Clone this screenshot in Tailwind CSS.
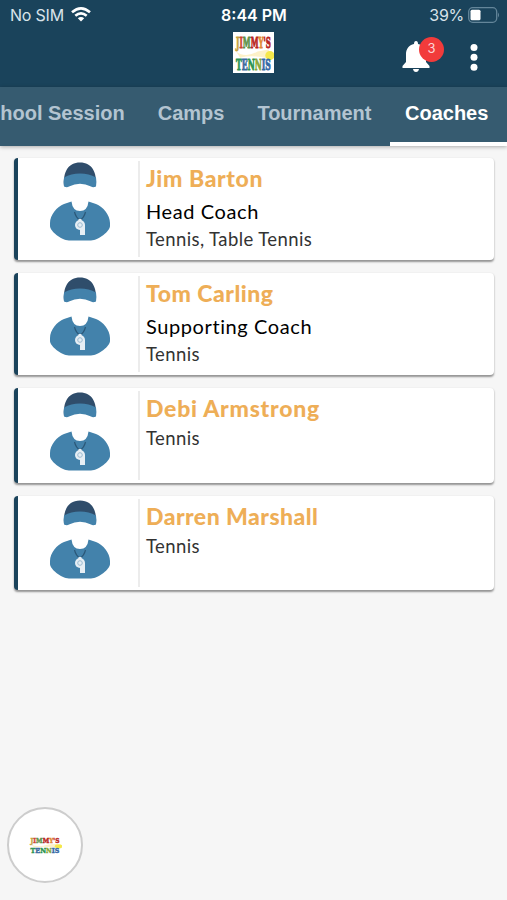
<!DOCTYPE html>
<html lang="en">
  <head>
    <meta charset="UTF-8" />
    <meta name="viewport" content="width=device-width, initial-scale=1.0" />
    <title>Coaches</title>
    <script src="https://cdn.jsdelivr.net/npm/@tailwindcss/browser@4"></script>
  </head>
  <body class="relative h-[900px] overflow-hidden bg-[#f6f6f6] font-['Lato',sans-serif]">
    <!-- Shared drawings -->
    <svg class="hidden">
      <symbol id="coach" viewBox="0 0 62 80">
        <path d="M15 24C14 10 19 0.500 31 0.500s17 9.500 16 23.500l-16-8z" fill="#2f4d6b" />
        <path d="M15 15.500Q22 11.500 31 11.500T47 15.500Q47.800 20 47 24.500Q44 26 42 24.500Q31 19 20 24.500Q18 26 15 24.500Q14.200 20 15 15.500Z" fill="#4382ab" />
        <path d="M22.500 39.500Q23.500 49 31 49T39.500 39.500L47 42C54 44.500 61 53 61 61V64C61 69 50 78 42 78.500H20C12 78 1 69 1 64V61C1 53 8 44.500 15 42Z" fill="#4382ab" />
        <path d="M25.500 50Q27 56 31 58Q35 56 36.500 50" fill="none" stroke="#2b5878" stroke-width="1.200" />
        <circle cx="31" cy="63" r="5" fill="#e6eef4" />
        <path d="M31 63h5v10h-5z" fill="#e6eef4" />
        <path d="M29.500 57h3v3h-3z" fill="#e6eef4" />
        <circle cx="31" cy="63" r="2.300" fill="none" stroke="#9bbbd1" stroke-width="1" />
      </symbol>
      <symbol id="logo" viewBox="0 0 40 40" preserveAspectRatio="none">
        <path d="M3 19Q12 26 24 19L35 17V26Q20 22 7 25Z" fill="#fdf1c8" />
        <circle cx="36" cy="23" r="4.500" fill="#f5e84c" />
        <g font-family="DejaVu Serif, serif" font-weight="bold" font-size="15" stroke-width="0.900">
          <text y="16" textLength="34" lengthAdjust="spacingAndGlyphs" x="3"><tspan fill="#c4a13c" stroke="#c4a13c">J</tspan><tspan fill="#d0442f" stroke="#d0442f">I</tspan><tspan fill="#5f934b" stroke="#5f934b">M</tspan><tspan fill="#b92523" stroke="#b92523">M</tspan><tspan fill="#e18a34" stroke="#e18a34">Y</tspan><tspan fill="#b92523" stroke="#b92523">'S</tspan></text>
          <text y="37" textLength="34" lengthAdjust="spacingAndGlyphs" x="3"><tspan fill="#2c9452" stroke="#2c9452">T</tspan><tspan fill="#3c6b9e" stroke="#3c6b9e">E</tspan><tspan fill="#2c9452" stroke="#2c9452">N</tspan><tspan fill="#8aa83c" stroke="#8aa83c">N</tspan><tspan fill="#3569a6" stroke="#3569a6">IS</tspan></text>
        </g>
      </symbol>
    </svg>

    <header class="h-[87px] bg-[#1a435b] text-white">
      <!-- Status bar -->
      <div class="grid h-[29px] grid-cols-3 items-center pl-2.5 pr-[7px] font-['Inter',sans-serif] text-[16px]">
        <div class="flex items-center gap-[7px] text-[#d9e3ea]">
          <span class="tracking-[-0.200px]">No SIM</span>
          <svg class="h-[15px] w-5" viewBox="0 0 20 15" fill="none" stroke="#fff" stroke-width="2.600">
            <path d="M1 5.300Q10-2.500 19 5.300M4.300 8.800Q10 4 15.700 8.800" />
            <path d="M6.800 11.300Q10 8.700 13.200 11.300L10 14.600Z" fill="#fff" stroke="none" />
          </svg>
        </div>
        <div class="pr-[2px] text-center font-semibold">8:44 PM</div>
        <div class="flex items-center justify-end gap-1 text-[#d9e3ea]">
          <span class="tracking-[-0.300px]">39%</span>
          <svg class="h-4 w-8" viewBox="0 0 32 16">
            <rect x="0.700" y="0.700" width="28" height="14.600" rx="4" fill="none" stroke="#64869a" stroke-width="1.300" />
            <rect x="2.500" y="2.800" width="10" height="10.400" rx="1.500" fill="#fff" />
            <path d="M30 5.500q2 2.500 0 5z" fill="#64869a" />
          </svg>
        </div>
      </div>
      <!-- App bar -->
      <div class="grid grid-cols-3 items-start pt-[3px]">
        <span></span>
        <svg class="h-[41px] w-[41px] justify-self-center bg-white"><use href="#logo" /></svg>
        <div class="flex justify-end gap-[40px] pr-[29px] pt-[5px]">
          <div class="relative">
            <svg class="mt-[3px] h-[33px] w-[28px]" viewBox="0 0 28 33" fill="#fff">
              <path d="M14 1q2 0 2 3c5 1 8 5 8 10v8l3.500 4v2H.5v-2l3.500-4v-8c0-5 3-9 8-10q0-3 2-3zM11 29h6q-.5 3-3 3t-3-3z" />
            </svg>
            <span class="absolute left-[17px] top-0 flex size-[25px] items-center justify-center rounded-full bg-[#f23b3b] pb-0.5 font-['Inter',sans-serif] text-[13px] text-[#fcd5d5]">3</span>
          </div>
          <svg class="mt-[6px] h-[29px] w-2" viewBox="0 0 8 29" fill="#fff">
            <circle cx="4" cy="4.500" r="3.500" />
            <circle cx="4" cy="14.300" r="3.500" />
            <circle cx="4" cy="24.200" r="3.500" />
          </svg>
        </div>
      </div>
    </header>

    <nav class="flex h-[59px] justify-end overflow-hidden whitespace-nowrap bg-[#365b70] font-['Liberation_Sans',sans-serif] text-[20px] font-bold leading-[52px] text-[#b3c4d1] shadow-[0_1px_4px_rgba(0,0,0,0.3)]">
      <a class="shrink-0 px-[16.500px]">School Session</a>
      <a class="shrink-0 px-[16.500px]">Camps</a>
      <a class="shrink-0 pl-[16.500px] pr-[18px]">Tournament</a>
      <a class="w-[117.500px] shrink-0 border-b-4 border-white pl-[15.500px] text-white">Coaches</a>
    </nav>

    <main class="flex flex-col gap-[13px] pl-3.5 pr-[13px] pt-3">
      <div class="flex h-[102px] rounded-[4px] border-l-4 border-[#1a435b] bg-white shadow-[0_1.500px_2px_rgba(0,0,0,0.4)]">
        <svg class="ml-[30.500px] mt-1 h-20 w-[62px]"><use href="#coach" /></svg>
        <div class="my-[3px] ml-[27.500px] border-l-2 border-[#ececec] pl-[6px]">
          <h2 class="pt-[3px] text-[23px] font-black leading-[28px] tracking-[0.600px] text-[#eeae57]">Jim Barton</h2>
          <p class="pt-[4px] text-[20px] leading-[30px] tracking-[0.600px] text-black">Head Coach</p>
          <p class="text-[18.500px] leading-[27px] tracking-[0.400px] text-[#333]">Tennis, Table Tennis</p>
        </div>
      </div>
      <div class="flex h-[102px] rounded-[4px] border-l-4 border-[#1a435b] bg-white shadow-[0_1.500px_2px_rgba(0,0,0,0.4)]">
        <svg class="ml-[30.500px] mt-1 h-20 w-[62px]"><use href="#coach" /></svg>
        <div class="my-[3px] ml-[27.500px] border-l-2 border-[#ececec] pl-[6px]">
          <h2 class="pt-[3px] text-[23px] font-black leading-[28px] tracking-[0.500px] text-[#eeae57]">Tom Carling</h2>
          <p class="pt-[4px] text-[20px] leading-[30px] tracking-[0.600px] text-black">Supporting Coach</p>
          <p class="text-[18.500px] leading-[27px] tracking-[0.400px] text-[#333]">Tennis</p>
        </div>
      </div>
      <div class="flex h-[94.500px] rounded-[4px] border-l-4 border-[#1a435b] bg-white shadow-[0_1.500px_2px_rgba(0,0,0,0.4)]">
        <svg class="ml-[30.500px] mt-1 h-20 w-[62px]"><use href="#coach" /></svg>
        <div class="my-[3px] ml-[27.500px] border-l-2 border-[#ececec] pl-[6px]">
          <h2 class="pt-[3px] text-[23px] font-black leading-[28px] tracking-[0.750px] text-[#eeae57]">Debi Armstrong</h2>
          <p class="pt-[3px] text-[18.500px] leading-[27px] tracking-[0.400px] text-[#333]">Tennis</p>
        </div>
      </div>
      <div class="flex h-[94.500px] rounded-[4px] border-l-4 border-[#1a435b] bg-white shadow-[0_1.500px_2px_rgba(0,0,0,0.4)]">
        <svg class="ml-[30.500px] mt-1 h-20 w-[62px]"><use href="#coach" /></svg>
        <div class="my-[3px] ml-[27.500px] border-l-2 border-[#ececec] pl-[6px]">
          <h2 class="pt-[3px] text-[23px] font-black leading-[28px] tracking-[0.450px] text-[#eeae57]">Darren Marshall</h2>
          <p class="pt-[3px] text-[18.500px] leading-[27px] tracking-[0.400px] text-[#333]">Tennis</p>
        </div>
      </div>
    </main>

    <!-- Floating club button -->
    <button class="absolute bottom-[17px] left-[7px] flex size-[76px] items-center justify-center rounded-full border-2 border-[#cdcdcd] bg-white">
      <svg class="h-[18px] w-[34px]"><use href="#logo" /></svg>
    </button>
  </body>
</html>
